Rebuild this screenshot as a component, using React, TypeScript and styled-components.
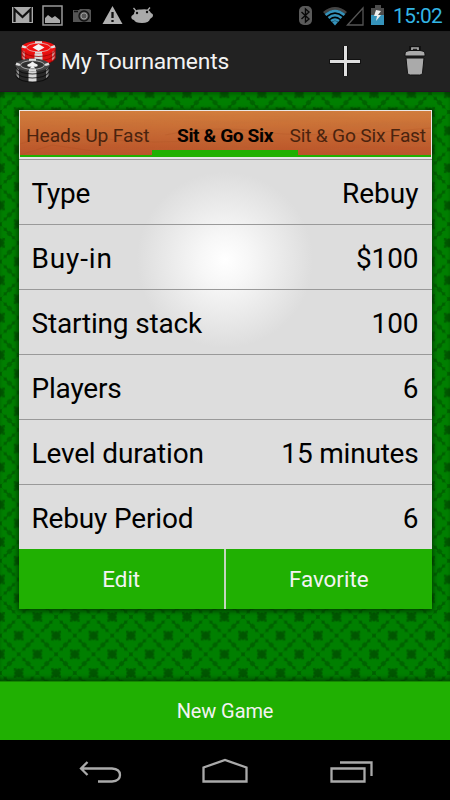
import React from "react";
import styled, { createGlobalStyle } from "styled-components";

const GlobalStyle = createGlobalStyle`
  * { box-sizing: border-box; }
  body { margin: 0; background: #000; font-family: Roboto, "Liberation Sans", sans-serif; }
  svg { display: block; flex: none; }
`;

const Screen = styled.div`
  width: 450px;
  height: 800px;
  display: flex;
  flex-direction: column;
  overflow: hidden;
  background: #000;
`;

const StatusBar = styled.div`
  height: 32px;
  flex: none;
  display: flex;
  justify-content: space-between;
  align-items: stretch;
  border-bottom: 1px solid #202020;
`;

const Clock = styled.span`
  color: #33b5e5;
  font-size: 20.8px;
  line-height: 32px;
  width: 57px;
  letter-spacing: -0.5px;
`;

const StatusGroup = styled.div`
  display: flex;
`;

const ActionBar = styled.header`
  height: 60px;
  flex: none;
  display: flex;
  align-items: center;
  background: #222;
  border-bottom: 1px solid #251724;
`;

const Title = styled.h1`
  flex: 1;
  margin: 0;
  padding: 1px 0 0 3px;
  font-size: 22.8px;
  letter-spacing: -0.18px;
  font-weight: 400;
  line-height: 30px;
  color: #f3f3f3;
  white-space: nowrap;
`;

const IconButton = styled.button`
  width: 70px;
  height: 60px;
  padding: 0;
  border: 0;
  background: none;
  display: flex;
  align-items: center;
  justify-content: center;
`;

const Table = styled.main`
  height: 589px;
  flex: none;
  display: grid;
  grid-template-rows: 589px;
  grid-template-columns: 450px;
  background: #007800;
`;

const Felt = styled.svg`
  grid-area: 1 / 1;
`;

const TableContent = styled.div`
  grid-area: 1 / 1;
  z-index: 1;
  padding: 18px 18.5px 0 18.5px;
  box-shadow: inset 0 -5px 5px -3px rgba(0, 30, 0, 0.6), inset 0 4px 4px -2px rgba(0, 30, 0, 0.4);
`;

const Card = styled.section`
  height: 499px;
  display: flex;
  flex-direction: column;
  box-shadow: 0 1px 5px 1px rgba(0, 35, 0, 0.75);
  background: radial-gradient(circle at 206px 150px, #fff 0, #f7f7f7 25px, #ddd 88px);
`;

const Tabs = styled.nav`
  height: 49px;
  flex: none;
  display: grid;
  border: 1.5px solid #ece7e5;
  border-bottom: 2px solid #e5e5e5;
  background: #bd622f;
  grid-template: 46px / 1fr;
`;

const Wood = styled.svg`
  grid-area: 1 / 1;
  width: 100%;
`;

const TabStrip = styled.div`
  grid-area: 1 / 1;
  z-index: 1;
  display: grid;
  grid-template-columns: 132px 146px 132px;
  border-bottom: 2px solid #20b000;
`;

const Tab = styled.div<{ $active?: boolean; $shift: number; $tracking: number }>`
  text-indent: ${(p) => p.$shift}px;
  min-width: 0;
  white-space: nowrap;
  font-size: 19.2px;
  line-height: 49px;
  height: 44px;
  font-weight: ${(p) => (p.$active ? 700 : 400)};
  letter-spacing: ${(p) => p.$tracking}px;
  color: ${(p) => (p.$active ? "#050200" : "#4a230e")};
  border-bottom: ${(p) => (p.$active ? "5px solid #20b000" : "0")};
`;

const Row = styled.div`
  height: 65px;
  flex: none;
  display: flex;
  justify-content: space-between;
  padding: 0 13px;
  border-top: 1px solid #999;
  color: #000;
  font-size: 28px;
  line-height: 67px;
  white-space: nowrap;
`;

const Cell = styled.span<{ $tracking: number }>`
  letter-spacing: ${(p) => p.$tracking}px;
`;

const Actions = styled.div`
  height: 60px;
  display: grid;
  grid-template-columns: 1fr 1fr;
  gap: 2px;
  background: #c5d6bf;
`;

const GreenButton = styled.button<{ $full?: boolean }>`
  height: ${(p) => (p.$full ? 59 : 60)}px;
  flex: none;
  width: 100%;
  padding: 0 0 ${(p) => (p.$full ? 0 : 1)}px;
  border: 0;
  border-top: ${(p) => (p.$full ? "1px solid #168600" : "0")};
  background: #20b002;
  color: #f3f3f3;
  font-family: inherit;
  font-size: ${(p) => (p.$full ? 20 : 22.4)}px;
  letter-spacing: ${(p) => (p.$full ? -0.1 : 0)}px;
`;

const NavBar = styled.footer`
  height: 60px;
  flex: none;
`;

type Setting = { name: string; value: string; nameTracking: number; valueTracking: number };

const rows: Setting[] = [
  { name: "Type", value: "Rebuy", nameTracking: -0.2, valueTracking: 0 },
  { name: "Buy-in", value: "$100", nameTracking: 0.85, valueTracking: -0.1 },
  { name: "Starting stack", value: "100", nameTracking: -0.18, valueTracking: -0.1 },
  { name: "Players", value: "6", nameTracking: -0.2, valueTracking: 0 },
  { name: "Level duration", value: "15 minutes", nameTracking: -0.16, valueTracking: -0.2 },
  { name: "Rebuy Period", value: "6", nameTracking: -0.16, valueTracking: 0 },
];

const Club = ({ x, y, r }: { x: number; y: number; r: number }) => (
  <g transform={`translate(${x} ${y}) rotate(${r})`} fill="#007f00">
    <circle cx="-4" cy="0.800" r="3.600" />
    <circle cx="4" cy="0.800" r="3.600" />
    <circle cx="0" cy="-4" r="3.700" />
    <path d="M-1.500 -2h3l1 7h-5z" />
  </g>
);

const ClubRing = ({ x, y }: { x: number; y: number }) => (
  <g transform={`translate(${x} ${y})`}>
    <Club x={0} y={-9.4} r={180} />
    <Club x={0} y={9.4} r={0} />
    <Club x={-9.4} y={0} r={90} />
    <Club x={9.4} y={0} r={270} />
  </g>
);

const Star = ({ x, y }: { x: number; y: number }) => (
  <g transform={`translate(${x} ${y})`} fill="#005600">
    <path d="M-4 -4L-1.500 -2.500L0 -5L1.500 -2.500L4 -4L2.500 -1.500L5 0L2.500 1.500L4 4L1.500 2.500L0 5L-1.500 2.500L-4 4L-2.500 1.500L-5 0L-2.500 -1.500Z" />
  </g>
);

const Pip = ({ x, y }: { x: number; y: number }) => (
  <path transform={`translate(${x} ${y})`} d="M0 -3L3 0L0 3L-3 0Z" fill="#006300" />
);

const FeltPattern = () => (
  <Felt width="450" height="589">
    <defs>
      <pattern id="clubs" width="37.4" height="37.4" patternUnits="userSpaceOnUse" patternTransform="translate(0 -17.4)">
        <rect width="37.4" height="37.4" fill="#006000" />
        <ClubRing x={18.7} y={18.7} />
        <ClubRing x={0} y={0} />
        <ClubRing x={37.4} y={0} />
        <ClubRing x={0} y={37.4} />
        <ClubRing x={37.4} y={37.4} />
        <Pip x={9.35} y={9.35} />
        <Pip x={28.05} y={9.35} />
        <Pip x={9.35} y={28.05} />
        <Pip x={28.05} y={28.05} />
        <Star x={18.7} y={0} />
        <Star x={18.7} y={37.4} />
        <Star x={0} y={18.7} />
        <Star x={37.4} y={18.7} />
      </pattern>
    </defs>
    <rect width="450" height="589" fill="url(#clubs)" />
  </Felt>
);

const WoodGrain = () => (
  <Wood height="46" viewBox="0 0 410 46" preserveAspectRatio="none">
    <defs>
      <linearGradient id="wood" x2="0" y2="1">
        <stop stopColor="#d27e3d" />
        <stop offset="1" stopColor="#b95128" />
      </linearGradient>
      <filter id="grain" x="0" y="0" width="100%" height="100%">
        <feTurbulence type="fractalNoise" baseFrequency="0.012 0.24" numOctaves="3" seed="4" />
        <feColorMatrix values="0 0 0 0 .48 0 0 0 0 .16 0 0 0 0 .05 0.8 0 0 0 -.28" />
      </filter>
    </defs>
    <rect width="410" height="46" fill="url(#wood)" />
    <rect width="410" height="46" filter="url(#grain)" opacity=".4" />
    <path d="M0 33Q35 20 80 27T180 29M0 44L32 34L80 41M145 24Q195 14 242 21T410 17" fill="none" stroke="#a44920" strokeOpacity=".2" />
  </Wood>
);

const Notifications = () => (
  <svg width="160" height="31" viewBox="0 0 160 31">
    <path fill="#aaa" d="M12 7h21v16H12z" />
    <path d="M14.500 22V9.500L22.500 17L30.500 9.500V22" fill="none" stroke="#111" strokeWidth="2.300" />
    <path d="M43 6h19v19H43z" fill="#050505" stroke="#999" strokeWidth="1.500" />
    <path d="M45 23V18L48 15L52 18L55 16L60 20V23Z" fill="#aaa" />
    <path d="M73 10H79L80 9H89L91 10V22H73Z" fill="#555" />
    <circle cx="84" cy="16" r="5" fill="#555" stroke="#111" strokeWidth="1.300" />
    <circle cx="84" cy="16" r="3" fill="none" stroke="#aaa" strokeWidth=".8" />
    <path d="M74 11.500h4" stroke="#111" strokeWidth="1.500" />
    <path d="M112.500 6L122.500 24H102.500Z" fill="#b0b0b0" />
    <path d="M112.500 12V18M112.500 20V22" stroke="#111" strokeWidth="2.300" />
    <path d="M136 11L133.500 8M147 11L150 7.500" stroke="#aaa" strokeWidth="1.300" />
    <path d="M134 14Q134 9 141 9.500Q149 8 151 13Q154 14 152.500 17L150 19Q149 23 142 23Q135 23 134 20Q130.500 19 131.500 16Z" fill="#aaa" />
    <circle cx="137" cy="13" r="1.200" fill="#111" />
    <circle cx="147" cy="12" r="1.200" fill="#111" />
  </svg>
);

const SystemIcons = () => (
  <svg width="94" height="31" viewBox="299 0 94 31">
    <rect x="299" y="6" width="13" height="19" rx="5" fill="#5a5a5a" />
    <path d="M301.500 12L309 19L305.500 22V9L309 12L301.500 19" fill="none" stroke="#080808" strokeWidth="1.400" />
    <path d="M323 12Q335 2 347 12L345 14Q335 6 325 14Z" fill="#444" />
    <path d="M325.500 15Q335 7 344.500 15M328.500 18Q335 12.500 341.500 18M331 21Q335 18 339 21" fill="none" stroke="#3593bb" strokeWidth="2.500" />
    <path d="M332 22Q335 20 338 22L335 25.500Z" fill="#3593bb" />
    <path d="M347.500 25L363 8V25Z" fill="#000" stroke="#555" strokeWidth="1.300" />
    <path d="M371 8h4V5h6v3h3v7h-13z" fill="#4c4c4c" />
    <path d="M371 15h13v10h-13z" fill="#3593bb" />
    <path d="M376 10L381 11L378 15H381L376 21L377 16H374Z" fill="#eee" />
  </svg>
);

const ChipStack = ({ x, y, dark }: { x: number; y: number; dark?: boolean }) => {
  const face = dark ? "#454545" : "#f01010";
  const side = dark ? "#292929" : "#df1111";
  const edge = dark ? "#080808" : "#980000";
  return (
    <g transform={`translate(${x} ${y})`}>
      <path d="M0 6.500V17Q4 23.500 17 23.500T34 17V6.500Z" fill={side} />
      <path d="M13 12h8v11.500h-8z" fill="#d9d9d9" />
      <path d="M1 9l2.500 2v9L1 18zM30.500 11L33 9v9l-2.500 2z" fill="#c9c9c9" opacity=".65" />
      <path d="M0 9Q4 15.500 17 15.500T34 9M0 13Q4 19.500 17 19.500T34 13M0 17Q4 23.500 17 23.500T34 17" fill="none" stroke={edge} strokeWidth="1.100" opacity=".75" />
      <ellipse cx="17" cy="6.500" rx="17" ry="6.500" fill={face} />
      <path d="M13.500 .3h7v2.200h-7zM13.500 10.500h7v2.300h-7zM1 4l4 1.500-1 2-4-1zM33 4l-4 1.500 1 2 4-1z" fill="#ddd" />
      <ellipse cx="17" cy="6.500" rx="12" ry="4.300" fill={dark ? "#303030" : face} stroke="#ddd" strokeWidth=".7" />
      <path d={dark ? "M17 3Q19 5 22 6Q23 9 18 8L20 10H14L16 8Q11 9 12 6Q15 5 17 3Z" : "M17 3L23 6.500L17 10L11 6.500Z"} fill="#f3f3f3" />
    </g>
  );
};

const ChipsLogo = () => (
  <svg width="58" height="60" viewBox="0 0 58 60">
    <ChipStack x={21.5} y={9} />
    <ChipStack x={15.5} y={26.5} dark />
  </svg>
);

export default function App() {
  return (
    <>
      <GlobalStyle />
      <Screen>
        <StatusBar>
          <Notifications />
          <StatusGroup>
            <SystemIcons />
            <Clock>15:02</Clock>
          </StatusGroup>
        </StatusBar>
        <ActionBar>
          <ChipsLogo />
          <Title>My Tournaments</Title>
          <IconButton aria-label="Add tournament">
            <svg width="32" height="32" viewBox="0 0 32 32">
              <path d="M0 13h14V0h5v13h13v5H19v12h-5V18H0z" fill="#111" />
              <path d="M1 14h14V0h3v14h13v3H18v13h-3V17H1z" fill="#e0e0e0" />
            </svg>
          </IconButton>
          <IconButton aria-label="Delete tournament">
            <svg width="24" height="32" viewBox="0 0 24 32">
              <g transform="translate(0 -1)">
                <path d="M8 7V2h8v5" fill="none" stroke="#111" strokeWidth="4" />
                <path d="M9 6V3h6v3" fill="none" stroke="#aaa" strokeWidth="1.700" />
                <path d="M2 9Q2 6 7 5.500h10q5 .5 5 3.500v2H2zM3 13h18l-1.500 15q0 2-3 2h-9q-3 0-3-2z" fill="#aaa" stroke="#111" />
              </g>
            </svg>
          </IconButton>
        </ActionBar>
        <Table>
          <FeltPattern />
          <TableContent>
            <Card>
              <Tabs>
                <WoodGrain />
                <TabStrip>
                  <Tab $shift={6.5} $tracking={-0.1}>Heads Up Fast</Tab>
                  <Tab $active $shift={25.5} $tracking={-0.4}>Sit &amp; Go Six</Tab>
                  <Tab $shift={-8} $tracking={-0.2}>Sit &amp; Go Six Fast</Tab>
                </TabStrip>
              </Tabs>
              {rows.map((row) => (
                <Row key={row.name}>
                  <Cell $tracking={row.nameTracking}>{row.name}</Cell>
                  <Cell $tracking={row.valueTracking}>{row.value}</Cell>
                </Row>
              ))}
              <Actions>
                <GreenButton>Edit</GreenButton>
                <GreenButton>Favorite</GreenButton>
              </Actions>
            </Card>
          </TableContent>
        </Table>
        <GreenButton $full>New Game</GreenButton>
        <NavBar>
          <svg width="450" height="60" fill="none" stroke="#aaa" strokeWidth="2.300">
            <path d="M87.500 22L81 28.500L87.500 35M81 28.500H112Q120 29 120 35Q120 41 112 41.500H98" />
            <path d="M203.500 41.500V27.500L225 20L246.500 27.500V41.500Z" />
            <path d="M331.500 28.500h33v13h-33zM340 22.500h31.500V36" />
          </svg>
        </NavBar>
      </Screen>
    </>
  );
}
